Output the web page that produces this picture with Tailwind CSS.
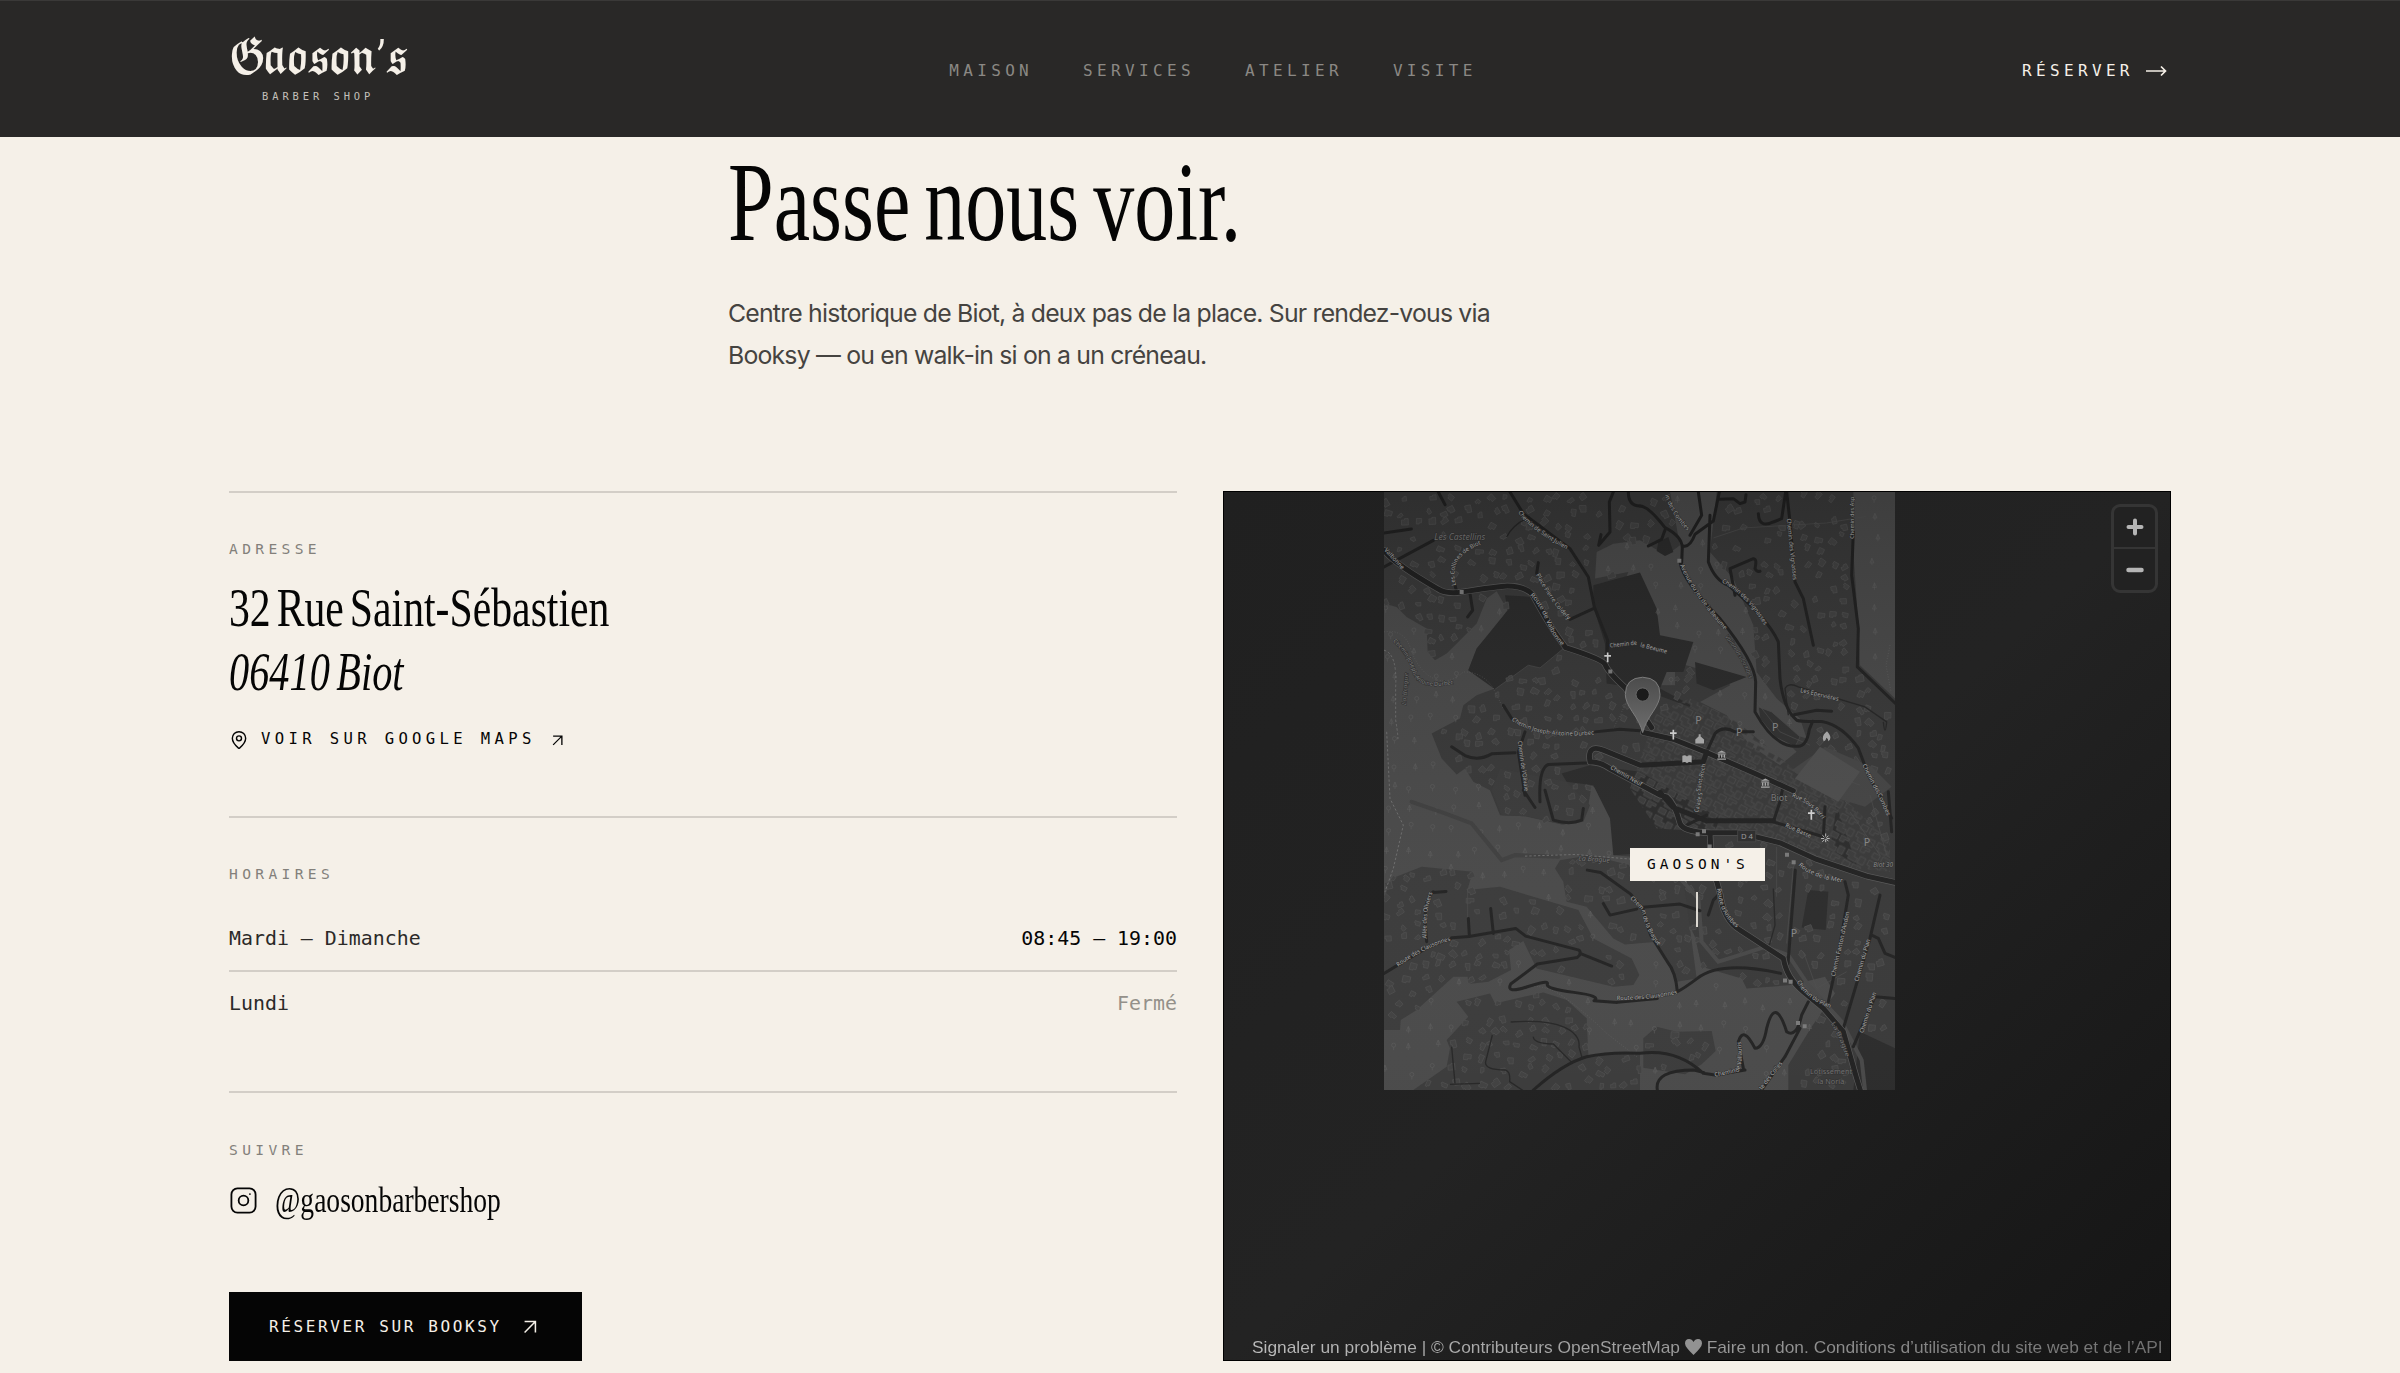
<!DOCTYPE html>
<html lang="fr">
<head>
<meta charset="utf-8">
<title>Gaoson's Barber Shop — Visite</title>
<script src="https://cdn.jsdelivr.net/npm/@tailwindcss/browser@4"></script>
</head>
<body class="bg-[#f5f0e8] w-[2400px] h-[1373px] overflow-hidden font-['Inter',sans-serif] text-[#050505]">
<header class="h-[137px] bg-[#292827] border-t border-[#3a3938] px-[229px] pt-[3px] flex items-center justify-between font-['DejaVu_Sans_Mono',monospace]">
  <a class="w-[175px] h-[72px] flex flex-col text-[#f5f0e8]" aria-label="Gaoson's Barber Shop">
    <span class="block h-[50px] leading-[50px] text-[47px] tracking-[-4px] whitespace-nowrap origin-left scale-x-[0.765] font-['DejaVu_Math_TeX_Gyre','Liberation_Serif',serif]">𝕲𝖆𝖔𝖘𝖔𝖓’𝖘</span>
    <span class="pl-[33px] pt-[4px] text-[10.4px] leading-[14px] tracking-[3.95px] text-[#c4c0ba] whitespace-nowrap">BARBER SHOP</span>
  </a>
  <nav class="flex gap-[50px] text-[16px] tracking-[4.35px] text-[#8b8884]">
    <a>MAISON</a><a>SERVICES</a><a>ATELIER</a><a>VISITE</a>
  </nav>
  <a class="w-[149px] flex items-center gap-[11px] text-[16px] tracking-[4.35px] text-[#f5f0e8]">RÉSERVER
    <svg class="w-[22px] h-[14px] shrink-0" viewBox="0 0 22 14" fill="none" stroke="currentColor" stroke-width="1.7"><path d="M1 7h20M16 2.500L20.500 7 16 11.500"/></svg>
  </a>
</header>
<main class="px-[229px]">
  <div class="pl-[499px]">
    <h1 class="pt-[5px] h-[134px] leading-[120px] text-[113px] [word-spacing:-9px] font-['Liberation_Serif',serif] whitespace-nowrap origin-left scale-x-[0.726]">Passe nous voir.</h1>
    <p class="pt-[22px] h-[220px] text-[24.8px] leading-[41.6px] tracking-[-0.8px] text-[#454340] whitespace-nowrap">Centre historique de Biot, à deux pas de la place. Sur rendez-vous via<br>Booksy — ou en walk-in si on a un créneau.</p>
  </div>
  <div class="flex gap-[46px]">
    <section class="w-[948px] font-['DejaVu_Sans_Mono',monospace]">
      <div class="h-[325px] border-t-2 border-[#d3cec7] pt-[46px]">
        <h2 class="text-[14.6px] leading-[20px] tracking-[4.35px] text-[#83807b]">ADRESSE</h2>
        <p class="mt-[17px] h-[64px] leading-[64px] text-[55.5px] [word-spacing:-6px] font-['Liberation_Serif',serif] whitespace-nowrap origin-left scale-x-[0.752]">32 Rue Saint-Sébastien</p>
        <p class="h-[64px] leading-[64px] text-[55.5px] [word-spacing:-5px] italic font-['Liberation_Serif',serif] whitespace-nowrap origin-left scale-x-[0.727]">06410 Biot</p>
        <a class="mt-[23px] flex items-center h-[26px] text-[15.6px] tracking-[4.35px]">
          <svg class="w-[20px] h-[20px] mr-[12px]" viewBox="0 0 24 24" fill="none" stroke="currentColor" stroke-width="1.7"><path d="M20 10c0 5-5.500 10.200-7.400 11.800a1 1 0 0 1-1.200 0C9.500 20.200 4 15 4 10a8 8 0 0 1 16 0"/><circle cx="12" cy="10" r="3"/></svg>VOIR SUR GOOGLE MAPS
          <svg class="w-[21px] h-[21px] ml-[11px]" viewBox="0 0 24 24" fill="none" stroke="currentColor" stroke-width="1.5"><path d="M7 7h10v10M7 17 17 7"/></svg>
        </a>
      </div>
      <div class="h-[275px] border-t-2 border-[#d3cec7] pt-[46px]">
        <h2 class="text-[14.6px] leading-[20px] tracking-[4.35px] text-[#83807b]">HORAIRES</h2>
        <div class="mt-[23px] flex justify-between h-[65px] items-center border-b-2 border-[#d3cec7] text-[19.900px] text-[#2b2a28]"><span>Mardi – Dimanche</span><span class="text-[#050505]">08:45 – 19:00</span></div>
        <div class="flex justify-between h-[63px] items-center text-[19.900px] text-[#2b2a28]"><span>Lundi</span><span class="text-[#94908a]">Fermé</span></div>
      </div>
      <div class="border-t-2 border-[#d3cec7] pt-[47px]">
        <h2 class="text-[14.6px] leading-[20px] tracking-[4.35px] text-[#83807b]">SUIVRE</h2>
        <a class="mt-[18px] flex items-center h-[44px]">
          <svg class="w-[29px] h-[29px] mr-[17px]" viewBox="0 0 24 24" fill="none" stroke="currentColor" stroke-width="1.5"><rect x="2" y="2" width="20" height="20" rx="5"/><circle cx="12" cy="12" r="4"/><circle cx="17.300" cy="6.700" r=".3" stroke-width="1"/></svg>
          <span class="text-[36.600px] leading-[44px] font-['Liberation_Serif',serif] whitespace-nowrap origin-left scale-x-[0.753]">@gaosonbarbershop</span>
        </a>
        <a class="mt-[70px] w-[353px] h-[69px] bg-[#050505] text-[#f5f0e8] pl-[40px] flex items-center text-[16px] tracking-[2.620px] whitespace-nowrap">RÉSERVER SUR BOOKSY
          <svg class="w-[26px] h-[26px] ml-[15px]" viewBox="0 0 24 24" fill="none" stroke="currentColor" stroke-width="1.4"><path d="M7 7h10v10M7 17 17 7"/></svg>
        </a>
      </div>
    </section>
    <section class="relative w-[948px] h-[870px] border border-black bg-linear-to-br from-[#202020] via-[#232323] to-[#151515]">
      <svg class="absolute left-[160px] top-0 w-[511px] h-[598px]" viewBox="12 20 1533 1795" preserveAspectRatio="none" font-family="Noto Sans, sans-serif">
        <defs>
          <pattern id="town" width="70" height="60" patternUnits="userSpaceOnUse" patternTransform="rotate(28)"><path d="M4 4h25v12h12v14H14V20H4zM46 6h18v22H46zM6 38h22v16H6zM36 36h26v8H50v10H36z" fill="#373737" stroke="#494949" stroke-width="2"/></pattern>
          <linearGradient id="shade" x1="0" y1="0" x2="0" y2="1"><stop offset="0" stop-color="#000" stop-opacity=".12"/><stop offset="1" stop-color="#fff" stop-opacity=".03"/></linearGradient>
          <linearGradient id="pin" x1="0" y1="0" x2="0" y2="1"><stop offset="0" stop-color="#4c4c4c"/><stop offset="1" stop-color="#6d6d6d"/></linearGradient>
          <g id="museum"><path d="M-13-7L0-14 13-7zM-12-5h24v3h-24zM-10-1h4v9h-4zM-2-1h4v9h-4zM6-1h4v9H6zM-13 10h26v4h-26z"/></g>
        </defs>
        <path d="M12 20h1533v1795H12z" fill="#353535"/>
        <path id="forest" fill="#464646" d="M12 355l38 10 30 30 60 35 3 70 22 25 35-20 40-40 50-50 30-75 30-22 33 57-38 55-55 60-25 65 40 25 40 30-55 20-40 30-10 40-85 45 30 75 45 48 25-18 25 40 50 25 30 75 75 3 110 25 60-8 20-50 10-60 20 15 40 85 8 110 52 5 90 60 60 100 40 80 20 90 120 35 15 30 135-10 100-25 30 50-70 100-70 115V1815H12zM650 200l50-25 80-10 80 45 40-30-30-160h140l-20 180 70 80 60 140 10 140 60 80 70 60 20 60-100-30-130-130-10-25-155-45v70h-70l70-110-20-25-75-15-5-70-60-70 20-50-100 20zM1420 20h125v620l-105-100-5-120-15-220zM960 650l90-50 50 40 80 90 70 70-50 40-90-60-70-90z"/>
        <path id="hamlets" fill="#373737" d="M35 1180l90-35 153 15-16 55 98-10 235 70 45 85 115 60 23 50-18 30-60 5-230-55-40-82-43 27 6 60-68 35-60 7-2-22h-43l-110 100-48 30-2 30H12v-395zM230 1550l100-25 15 30 145-33 70 23 60 55 5 110 155-5v110H100l100-70 10-55-10-25 65-70zM335 915l30 75 75 3 110 25 60-8 20-50-70-70-200-40zM540 1125l90-15 280 70 40 300-60 10-60-120-95 8-35-18-80-95-60-15-10-60-25-40zM790 1660l40-35 60 15 105-2 12 60-42 40-50 30-125-20z"/>
        <path id="fields" fill="#272727" d="M375 330l80 5 45 65 50 90-70 58-35-8-100 72-80-57 25-65 93-115zM640 300l140-38 50 108 10 80 100 20-30 90h-50l-20 50 130 70-190-70-100-15-5-120-35-110zM945 530l155 45-100 40-50-20zM545 865l85-25 150 20 120 70 120 70-40 90-280 20-10-110-50-100-80-10zM1285 1215l60 5-8 115-72-8zM1370 965l60 175-80-50zM1440 1640l105 50v125h-125zM835 170l30-15 15 45-25 12-25-15z"/>
        <path id="village" d="M830 680l100-40 130 60 180 150 120 60 170 160 0 90-190-20-180-90-330-20-80-120z" fill="url(#town)"/>
        <g id="symbols"></g>
        <path d="M1235 855l100-70 140 60 60 60-80 60-100-30z" fill="#414141"/><path d="M1320 785l120 75-65 90-130-70z" fill="#4a4a4a"/><path d="M1135 665l40 15 85 75-15 30-60-30-45-55z" fill="#2d2d2d" stroke="#484848" stroke-width="2"/>
        <g fill="none" stroke="#4a4a4a" stroke-width="2"><path d="M1000 158l90-30 250-15 120-20M1190 1085v150M1130 650l70 90 90 40M1240 1145l-20 230M1270 1400l40 110 90-50M1280 840l160 60M1410 980l90 130M1470 930l50 180M345 612l100-72 35 8 70-58M263 1215v90"/></g>
        <g fill="none" stroke="#3c3c3c" stroke-width="12" stroke-linecap="round"><path d="M95 950l100 35 80 30 90 110 40-15 130 5"/><path d="M900 1180l55 60 10 130 50 60 80-25 60-20 70 25 60 90 100 110 60 115 10 90" stroke="#444"/></g>
        <g fill="none" stroke="#6a6a6a" stroke-width="3" stroke-dasharray="7 6"><path d="M12 495q40 10 35 110l0 100q10 60 5 60M20 740l10 200 40 80-30 130-25 70M435 1113l150-5 180 15 160 70"/></g>
        <g fill="none" stroke="#666" stroke-width="2" stroke-dasharray="2 6"><path d="M12 440q60-10 80 50t60 85q50 30 98-15 60 0 90 50l30 60M400 1515q80-30 150 20t130 110l90 70M740 650l-40 80M1530 480l-12 60 15 80"/></g>
        <!-- minor streets -->
        <g fill="none" stroke="#222" stroke-width="4"><path d="M392 1611q110-8 160 15t45 60l10 35M460 1655q0 20 60 22l55 55M337 1650l-20 80q-5 25 60 25 15 5 12 35l45 30M215 1685l10 110M210 1798l90-3M1225 690l-10-80q10-20 40-5l200 60 65 45q-5 50 -10 0M450 95q-50 20-70 60M1180 1210l5 110-17 60"/></g>
        <g fill="none" stroke="#1e1e1e" stroke-width="9" stroke-linejoin="round" stroke-linecap="round">
          <path class="street" d="M12 245l148-80M12 143l82-12M175 20l20 38M390 20l40 65 140 105 55 85 18 90 40 100-4 75M700 20l-12 30 2 90-34 40 7-32M475 232l-5 32M570 402l70-32M745 20q0 42 35 42M225 300l5 18M270 325l8 50-15 20M215 785l40 26q40 18 80-5l70-3M435 740l-20 60 20 130M480 950q-5-100 25-112l130-5M645 740l75-8 60 5M370 660l25 40"/>
          <path class="street" d="M780 62q25 0 75 65 50 25 52 60l-2 45M805 182l40-20 10-28M910 182q20 5 35-35l55-40 18-87M955 20l10 70-35 60M1020 42l40-2 20 15 15-5 3-22M990 90l-5 140q20 55 60 70 120 100 150 170l5 110q10 90 50 125 15 5 75 4 60 10 110 80l30 80 70 130M900 230q10 60 120 170 105 130 107 190l-2 90q60 110 130 103 25 0 33-50l10-25M1235 690l75-15 45 3M1065 330l-15-80 70-30q12 0 5 30 5 10 15 8M1135 85q2 45 45 25l25-10 12-80M1220 20l10 90 15 180 25 50 30 140M1420 140l-5 130 20 160-3 115 120 115"/>
          <path class="street" d="M12 1465l50-30 75-45 80-32 50-4 140-24 30 23 160 42q10 10-5 22l-120 20-80 60q-15 30 50 8t60-8 80 25 60 25l70 5 120-12M600 1405l95 38M265 1300l3 50M332 1270l8 75M160 1222l38-3M495 915l25 90q50 15 85 0l5-35M430 915l35 52M622 1155l40 7 90 65 40 50M670 1255l20 35 80-18M140 1370l-5-60q0-70 25-90"/>
          <path class="street" d="M460 1815q90-80 160-100 70-15 160-10 110-15 190 60l35 5 90-15M780 1267l120-10 60 20M892 1520q-5-60-30-90l-50-80-25-80M892 1520q20-10 60-40 70-55 250-15M985 1290l15-45 25-25M1246 1155l-22 280M1395 1190l10 40-30 180-30 140M1500 1230l-30 130-80 270M1420 1685l65-150 60 5M832 1815q-10-60 110-60l30 8M1090 1750l-15-80q15-50 50 20 25 0 35-60 25-100 60 10 30 20 45-50l20-40M1145 1815l70-100 45-85M1475 1350l20 10 20 45 30 12M1180 1010l20-60 8-40M1180 1010l150 45 5-90M980 800l25-55q25-25 60-5l55 0M980 990l-60 30M1525 920l10 120"/>
        </g>
        <!-- main roads, drawn with a light casing -->
        <g fill="none" stroke-linejoin="round" stroke-linecap="round"><g stroke="#555" stroke-width="19"><path class="street" d="M12 195q30 40 160 115 20 15 60 12 130-20 150-20 50 0 75 25 60 110 100 160 110 35 118 50 10 25 60 70l80 120M790 742l90 20 100 40 150 65 110 50M630 830q-10-55 40-35l110 45M630 830q30 0 60 20l150 80 20 5q25 20 40 80 10 25 90 28l90 0 120 30 110 50 150 50 90 20M990 1045l5 90 25 90q10 80 60 110l130 85q10 60 60 100l60 50 60 70 40 140 20 65"/></g>
        <g stroke="#1d1d1d" stroke-width="15"><path d="M12 195q30 40 160 115 20 15 60 12 130-20 150-20 50 0 75 25 60 110 100 160 110 35 118 50 10 25 60 70l80 120M790 742l90 20 100 40 150 65 110 50M630 830q-10-55 40-35l110 45M630 830q30 0 60 20l150 80 20 5q25 20 40 80 10 25 90 28l90 0 120 30 110 50 150 50 90 20M990 1045l5 90 25 90q10 80 60 110l130 85q10 60 60 100l60 50 60 70 40 140 20 65M780 840l190-10 10-30M980 1007l-100-40-40-45M980 1007h200"/></g></g>
        <g fill="#777"><path d="M239 314h12v12h-12zM685 553h12v12h-12zM892 220h12v12h-12zM947 1041h12v12h-12zM966 1032h12v12h-12zM983 1078h12v12h-12zM1215 1103h12v12h-12zM1235 1125h12v12h-12zM1209 1480h12v12h-12zM1226 1484h12v12h-12zM1248 1608h12v12h-12zM1268 1618h12v12h-12z"/></g>
        <!-- street names -->
        <defs>
          <path id="s1" d="M415 80q20 45 150 115"/><path id="s2" d="M228 300q-15-60 20-90 20-20 60-35"/><path id="s3" d="M468 268q40 80 100 140"/><path id="s4" d="M450 330q30 30 50 80 20 50 50 75"/><path id="s5" d="M12 195l55 60"/><path id="s6" d="M38 470q40 30 60 90 15 60 130 35"/><path id="s7" d="M395 705q80 60 255 42"/><path id="s8" d="M413 768l22 155"/><path id="s9" d="M690 487l84-9"/><path id="s10" d="M690 850l95 55"/>
          <path id="s11" d="M855 30q20 60 70 110"/><path id="s12" d="M900 240q40 90 138 200"/><path id="s13" d="M1025 290q80 45 130 135"/><path id="s14" d="M1220 100l20 190"/><path id="s15" d="M1423 160V30"/><path id="s16" d="M1260 620l118 28"/><path id="s17" d="M1447 840l45 90"/><path id="s18" d="M960 920l18-85"/><path id="s19" d="M1034 455q50 60 75 130"/>
          <path id="s20" d="M55 1445q80-60 162-80"/><path id="s21" d="M140 1360q-5-90 20-140"/><path id="s22" d="M710 1545q100 0 187-20"/><path id="s23" d="M750 1240l35 36"/><path id="s24" d="M785 1275q10 60 52 110"/><path id="s25" d="M1012 1210q5 80 62 120"/><path id="s26" d="M1255 1140q40 40 137 52"/><path id="s27" d="M1215 1025l78 35"/><path id="s28" d="M1235 935q60 20 93 70"/><path id="s29" d="M1365 1475l45-200"/><path id="s30" d="M1435 1490l37-130"/><path id="s31" d="M1250 1490q30 55 104 80"/><path id="s32" d="M1450 1645l40-125"/><path id="s33" d="M1005 1775l70-15q15-20 8-95"/><path id="s34" d="M1145 1815l65-82"/><path id="s35" d="M1353 1615q30 50 45 105"/><path id="s36" d="M1487 915l35 80"/><path id="s37" d="M782 967l90 38"/><path id="s38" d="M78 660l7-100"/><path id="s39" d="M955 982l13-60"/><path id="s40" d="M780 484l82 22"/>
        </defs>
        <g font-size="18" fill="#a8a8a8" stroke="#2a2a2a" stroke-width="3" paint-order="stroke">
          <text><textPath href="#s1">Chemin de Saint Julien</textPath></text><text><textPath href="#s2">Les Collines de Biot</textPath></text><text><textPath href="#s3">Place Pierre Coldefy</textPath></text><text><textPath href="#s4">Route de Valbonne</textPath></text><text><textPath href="#s5">Valbonne</textPath></text><text fill="#858585"><textPath href="#s6">Chemin Joseph-Antoine Durbec</textPath></text><text><textPath href="#s7">Chemin Joseph-Antoine Durbec</textPath></text><text><textPath href="#s8">Chemin de l'Olivaie</textPath></text><text><textPath href="#s9">Chemin de</textPath></text><text><textPath href="#s10">Chemin Neuf</textPath></text>
          <text><textPath href="#s11">in des Combes</textPath></text><text><textPath href="#s12">Avenue du Jeu de la Beaume</textPath></text><text><textPath href="#s13">Chemin des Vignasses</textPath></text><text><textPath href="#s14">Chemin des Vignasses</textPath></text><text><textPath href="#s15">Chemin des Asp</textPath></text><text><textPath href="#s16">Les Epervières</textPath></text><text><textPath href="#s17">Chemin des</textPath></text><text><textPath href="#s18">Saint-Roch</textPath></text><text fill="#707070" font-style="italic"><textPath href="#s19">Vallon des Combes</textPath></text>
          <text><textPath href="#s20">Route des Clausonnes</textPath></text><text><textPath href="#s21">Allée des Oliviers</textPath></text><text><textPath href="#s22">Route des Clausonnes</textPath></text><text><textPath href="#s23">Chem</textPath></text><text><textPath href="#s24">in de la Brague</textPath></text><text><textPath href="#s25">Route d'Antibes</textPath></text><text><textPath href="#s26">Route de la Mer</textPath></text><text><textPath href="#s27">Rue Basse</textPath></text><text><textPath href="#s28">Rue Sous Barri</textPath></text><text><textPath href="#s29">Chemin Fanton d'Andon</textPath></text><text><textPath href="#s30">Chemin du Plan</textPath></text><text><textPath href="#s31">Chemin du Plan</textPath></text><text><textPath href="#s32">Chemin du Plan</textPath></text><text><textPath href="#s33">Chemin de Vallauris</textPath></text><text><textPath href="#s34">te des Colles</textPath></text><text fill="#707070"><textPath href="#s35">La Brague</textPath></text><text><textPath href="#s36">s Combes</textPath></text><text fill="#707070" font-style="italic"><textPath href="#s38">La Brague</textPath></text>
          <text><textPath href="#s40">la Beaume</textPath></text><text><textPath href="#s39">Calade S</textPath></text>
          <text x="595" y="1126" font-size="21" font-style="italic" fill="#757575" transform="rotate(4 595 1126)">La Brague</text>
          <text x="163" y="165" font-size="26" font-style="italic" fill="#707070">Les Castellins</text><text x="1172" y="948" font-size="27" fill="#777">Biot</text><text x="1480" y="1146" font-size="19" font-style="italic" fill="#888">Biot 30</text><text x="1290" y="1768" font-size="22" fill="#6c6c6c">Lotissement</text><text x="1312" y="1798" font-size="22" fill="#6c6c6c">la Noria</text>
        </g>
        <g font-size="32" fill="#858585"><text x="946" y="717">P</text><text x="1068" y="752">P</text><text x="1176" y="738">P</text><text x="1451" y="1084">P</text><text x="1232" y="1357">P</text></g>
        <path d="M1073 1036h54v34h-54z" fill="#292929" stroke="#484848" stroke-width="2"/><text x="1083" y="1062" font-size="23" fill="#999">D 4</text>
        <g stroke="#d5d5d5" stroke-width="5"><path d="M683 502v29M673 512h20M880 734v29M870 744h20M1294 974v30M1284 984h20"/></g>
        <g fill="#aaa"><use href="#museum" x="1025" y="810"/><use href="#museum" x="1156" y="894"/><path d="M946 763l13-12 13 12v12h-26zM956 747h6v6h-6z"/><path d="M907 812q8-4 14 2 6-6 14-2v20q-8-4-14 2-6-6-14-2zM1341 738q-18 14-10 30 6 0 8-10 6 2 6 10 14-10-4-30z"/></g>
        <g stroke="#bbb" stroke-width="3" stroke-dasharray="9 8"><path d="M1337 1045v30M1323 1060h29M1327 1050l20 20M1327 1070l20-20"/></g>
        <path d="M12 20h1533v1795H12z" fill="url(#shade)"/>
        <path d="M788 742q-7-28-32-64-20-30-20-50 0-50 52-52 52 2 52 52 0 20-20 50-25 36-32 64z" fill="url(#pin)" stroke="#7b7b7b" stroke-width="3"/><circle cx="788" cy="628" r="20" fill="#1b1b1b" stroke="#666" stroke-width="3"/>
      </svg>
      <div class="absolute left-[887px] top-[12px] w-[47px] h-[89px] border-[3px] border-[#353535] rounded-[9px] bg-[#222]">
        <div class="h-[42px] border-b-2 border-[#353535] flex items-center justify-center"><svg class="w-[20px] h-[20px]" viewBox="0 0 20 20" stroke="#b5b5b5" stroke-width="4" stroke-linecap="round"><path d="M3.500 10h13M10 3.500v13"/></svg></div>
        <div class="h-[41px] flex items-center justify-center"><svg class="w-[20px] h-[20px]" viewBox="0 0 20 20" stroke="#b5b5b5" stroke-width="4.500" stroke-linecap="round"><path d="M3.500 10h13"/></svg></div>
      </div>
      <div class="absolute left-[406px] top-[356px] w-[135px] h-[33px] bg-[#f5f0e8] pl-[17px] leading-[33px] text-[14.500px] tracking-[4px] whitespace-nowrap font-['DejaVu_Sans_Mono',monospace]">GAOSON'S</div>
      <div class="absolute left-[472px] top-[400px] w-[2px] h-[35px] bg-[#dcd8d1]"></div>
      <div class="absolute left-[28px] bottom-[2px] leading-[22px] text-[17.350px] whitespace-nowrap font-['Liberation_Sans',sans-serif] bg-linear-to-r from-[#bbb] via-[#999] to-[#717171] bg-clip-text text-transparent">Signaler un problème | © Contributeurs OpenStreetMap <svg class="inline w-[17px] h-[16px] -mt-[3px]" viewBox="0 0 17 16" fill="#929292"><path d="M8.500 16Q0 8 0 4.500 0 0 4 0q3 0 4.500 3Q10 0 13 0q4 0 4 4.500Q17 8 8.500 16z"/></svg> Faire un don. Conditions d’utilisation du site web et de l’API</div>
    </section>
  </div>
</main>
<script>
  // Fit every street name to the length of its street.
  document.querySelectorAll('textPath').forEach(t => {
    const p = document.querySelector(t.getAttribute('href'));
    t.parentNode.setAttribute('textLength', p.getTotalLength() * 0.97);
    t.parentNode.setAttribute('lengthAdjust', 'spacingAndGlyphs');
    t.setAttribute('textLength', p.getTotalLength() * 0.97);
    t.setAttribute('lengthAdjust', 'spacingAndGlyphs');
  });
  // Scatter trees over the woods and houses over the built-up areas.
  const el = id => document.getElementById(id);
  const streets = [...document.querySelectorAll('.street')];
  streets.forEach(s => s.style.strokeWidth = '34px');
  let seed = 7, trees = '', houses = '';
  const rnd = () => (seed = (seed * 16807) % 2147483647) / 2147483647;
  const place = (step, jitter, draw) => {
    for (let y = 40; y < 1800; y += step) for (let x = 30; x < 1535; x += step) {
      const p = new DOMPoint(x + (rnd() - .5) * jitter, y + (rnd() - .5) * jitter);
      if (el('fields').isPointInFill(p) || el('village').isPointInFill(p) || streets.some(s => s.isPointInStroke(p))) continue;
      draw(p, el('forest').isPointInFill(p) && !el('hamlets').isPointInFill(p));
    }
  };
  place(66, 30, (p, wood) => {
    if (wood) trees += rnd() > .5 ? `M${p.x} ${p.y - 11}l-6 14h12zv21` : `M${p.x - 6} ${p.y}a6 6 0 1 1 12 0a6 6 0 1 1-12 0M${p.x} ${p.y + 6}v9`;
  });
  place(39, 26, (p, wood) => {
    if (wood || rnd() < .2) return;
    const w = 10 + rnd() * 14, h = 9 + rnd() * 8;
    houses += `<path transform="translate(${p.x} ${p.y}) rotate(${rnd() * 180})" d="M${-w / 2} ${-h / 2}h${w}v${h}h${-w * .45}v4h${-w * .55}z"/>`;
  });
  streets.forEach(s => s.style.strokeWidth = '');
  el('symbols').innerHTML = `<path d="${trees}" fill="none" stroke="#575757" stroke-width="2"/><g fill="#3d3d3d" stroke="#4b4b4b" stroke-width="2">${houses}</g>`;
</script>
</body>
</html>
